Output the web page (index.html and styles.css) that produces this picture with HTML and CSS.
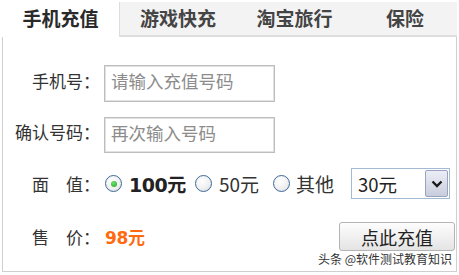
FILE: index.html
```html
<!DOCTYPE html>
<html lang="zh-CN">
<head>
<meta charset="utf-8">
<link rel="stylesheet" href="styles.css">
</head>
<body>
<div class="widget">
  <div class="tabs">
    <div class="tab active">手机充值</div>
    <div class="tab first-inactive">游戏快充</div>
    <div class="tab">淘宝旅行</div>
    <div class="tab last">保险</div>
  </div>
  <div class="body">
    <div class="row row-phone">
      <label class="label">手机号：</label>
      <input class="field" type="text" placeholder="请输入充值号码">
    </div>
    <div class="row row-confirm">
      <label class="label">确认号码：</label>
      <input class="field" type="text" placeholder="再次输入号码">
    </div>
    <div class="row row-amount">
      <span class="label">面　值：</span>
      <span class="opt opt-first"><span class="radio checked"></span><b class="big">100元</b></span>
      <span class="opt opt-second"><span class="radio"></span><span class="mid">50元</span></span>
      <span class="opt opt-third"><span class="radio"></span><span class="mid">其他</span></span>
      <span class="select">
        <span class="select-text">30元</span>
        <span class="select-btn">
          <svg width="12" height="8" viewBox="0 0 12 8"><path d="M1.5 1.5 L6 6 L10.5 1.5" fill="none" stroke="#1a1a1a" stroke-width="2.4"/></svg>
        </span>
      </span>
    </div>
    <div class="row row-price">
      <span class="label">售　价：</span>
      <b class="price">98元</b>
      <button class="submit" type="button">点此充值</button>
    </div>
    <div class="watermark">头条 @软件测试教育知识</div>
  </div>
</div>
</body>
</html>
```

FILE: styles.css
```css
html, body {
  margin: 0;
  padding: 0;
  background: #fff;
}
body {
  font-family: "Noto Sans CJK SC", "Noto Sans", sans-serif;
  color: #333;
}
.widget {
  margin-left: 2px;
  width: 455px;
}
.tabs {
  display: flex;
  height: 37px;
}
.tab {
  width: 117px;
  box-sizing: border-box;
  margin-top: 2px;
  height: 35px;
  background: #f3f3f3;
  border-bottom: 2px solid #dedede;
  font-weight: bold;
  font-size: 19px;
  line-height: 31px;
  text-align: center;
  color: #444;
}
.tab.first-inactive {
  border-left: 1px solid #dcdcdc;
}
.tab.active {
  background: #fff;
  border: none;
  margin-top: 0;
  height: 37px;
  line-height: 36px;
  color: #2a2a2a;
}
.tab.last {
  flex: 1;
}
.body {
  box-sizing: border-box;
  height: 235px;
  border-left: 1px solid #cfcfcf;
  border-right: 1px solid #cfcfcf;
  border-bottom: 1px solid #cfcfcf;
  padding-top: 28px;
}
.row {
  display: flex;
  align-items: center;
}
.label {
  width: 97px;
  flex: none;
  text-align: right;
  font-size: 17px;
  color: #333;
}
.row-phone .label,
.row-confirm .label {
  margin-bottom: 7px;
}
.row-phone {
  height: 37px;
}
.row-confirm {
  height: 36px;
  margin-top: 15px;
}
.field {
  box-sizing: border-box;
  margin: 0 0 0 4px;
  width: 171px;
  height: 100%;
  border: 1px solid #bdbdbd;
  box-shadow: inset 0 0 0 1px #e2e2e2;
  padding: 0 0 6px 6px;
  font-family: inherit;
  font-size: 17.5px;
  color: #333;
  outline: none;
  background: #fff;
}
.field::placeholder {
  color: #8c8c8c;
}
.row-amount {
  height: 31px;
  margin-top: 15px;
}
.opt {
  display: flex;
  align-items: center;
  flex: none;
}
.opt-first {
  margin-left: 5px;
  width: 90px;
}
.opt-second {
  width: 78px;
}
.opt-third {
  width: 78px;
}
.radio {
  box-sizing: border-box;
  width: 17px;
  height: 17px;
  border-radius: 50%;
  border: 1.5px solid #3c6a99;
  background: radial-gradient(circle at 40% 35%, #ffffff 0%, #f0f0f0 55%, #d6d6d6 100%);
  display: flex;
  align-items: center;
  justify-content: center;
  margin-right: 7px;
  flex: none;
}
.radio.checked::after {
  content: "";
  width: 6px;
  height: 6px;
  border-radius: 50%;
  background: radial-gradient(circle at 40% 35%, #6fe36f, #22a022);
}
.big {
  font-family: "DejaVu Sans", "Noto Sans CJK SC", sans-serif;
  font-size: 19px;
  font-weight: bold;
  color: #222;
  letter-spacing: -0.5px;
}
.mid {
  font-size: 19px;
  color: #333;
}
.opt-third .mid {
  margin-left: -1px;
}
.select {
  box-sizing: border-box;
  width: 99px;
  height: 31px;
  border: 1px solid #a3bad4;
  display: flex;
  align-items: center;
  justify-content: space-between;
  background: #fff;
}
.select-text {
  padding-left: 6px;
  font-size: 18.5px;
  color: #222;
}
.select-btn {
  box-sizing: border-box;
  width: 23px;
  height: 27px;
  margin-right: 1px;
  border: 1px solid #9aa3bd;
  border-radius: 2px;
  background: linear-gradient(#eceef6, #c9ccdc);
  display: flex;
  align-items: center;
  justify-content: center;
}
.row-price {
  height: 29px;
  margin-top: 23px;
}
.price {
  margin-left: 5px;
  font-family: "DejaVu Sans", "Noto Sans CJK SC", sans-serif;
  font-size: 17px;
  font-weight: bold;
  color: #ff6a10;
  letter-spacing: -0.3px;
}
.submit {
  margin: 0 1px 0 auto;
  box-sizing: border-box;
  width: 116px;
  height: 29px;
  border: 1px solid #b4b4b4;
  border-radius: 3px;
  background: linear-gradient(#fdfdfd, #e4e4e4);
  font-family: inherit;
  font-size: 18px;
  color: #222;
  padding: 0;
  line-height: 26px;
}
.watermark {
  text-align: right;
  padding-right: 4px;
  margin-top: 1px;
  font-size: 12px;
  line-height: 14px;
  color: #333;
}
```
